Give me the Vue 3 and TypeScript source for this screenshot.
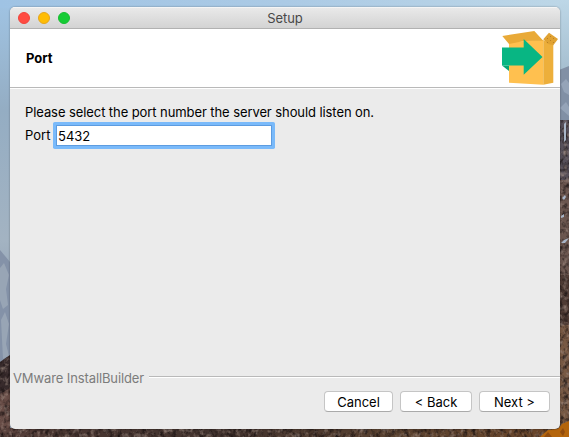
<script setup lang="ts">
import { ref } from 'vue'

const port = ref('5432')
const buttons = [
  { label: 'Cancel', kind: 'cancel' },
  { label: '< Back', kind: 'back' },
  { label: 'Next >', kind: 'next' },
]
</script>

<template>
  <div class="desktop">
    <svg class="wallpaper" viewBox="0 0 569 437" width="569" height="437" aria-hidden="true">
      <defs>
        <linearGradient id="sky" x1="0" y1="0" x2="0" y2="1">
          <stop offset="0" stop-color="#a0c4e4" />
          <stop offset="0.25" stop-color="#94adc3" />
          <stop offset="0.55" stop-color="#a3b3c2" />
          <stop offset="0.8" stop-color="#8794a8" />
        </linearGradient>
        <linearGradient id="top" x1="0" y1="0" x2="1" y2="0">
          <stop offset="0" stop-color="#9fc3e4" />
          <stop offset="0.5" stop-color="#abcae5" />
          <stop offset="1" stop-color="#bdd7e7" />
        </linearGradient>
        <linearGradient id="haze" x1="0" y1="0" x2="0" y2="1">
          <stop offset="0" stop-color="#bdd7e7" />
          <stop offset="1" stop-color="#a6bfd0" />
        </linearGradient>
        <linearGradient id="ground" x1="0" y1="0" x2="1" y2="0">
          <stop offset="0" stop-color="#5b423d" />
          <stop offset="0.1" stop-color="#493631" />
          <stop offset="0.4" stop-color="#42332e" />
          <stop offset="0.7" stop-color="#5a4230" />
          <stop offset="1" stop-color="#6b4528" />
        </linearGradient>
        <filter id="grain" x="0" y="0" width="1" height="1" color-interpolation-filters="sRGB">
          <feTurbulence type="fractalNoise" baseFrequency="0.22 0.18" numOctaves="3" seed="9" result="t" />
          <feColorMatrix in="t" values="0 0 0 0 0.1  0 0 0 0 0.07  0 0 0 0 0.07  2.2 0 0 0 -0.95" />
          <feComposite in2="SourceGraphic" operator="in" result="dark" />
          <feColorMatrix in="t" values="0 0 0 0 0.68  0 0 0 0 0.6  0 0 0 0 0.56  0 1.6 0 0 -0.8" />
          <feComposite in2="SourceGraphic" operator="in" result="light" />
          <feMerge>
            <feMergeNode in="SourceGraphic" />
            <feMergeNode in="dark" />
            <feMergeNode in="light" />
          </feMerge>
        </filter>
      </defs>
      <rect width="569" height="437" fill="url(#sky)" />
      <rect width="569" height="8" fill="url(#top)" />
      <rect x="559" width="10" height="70" fill="url(#haze)" />
      <path d="M559 70L569 66V125H559Z" fill="#8190a5" />
      <path d="M561 84l5-5 3 4v12l-5-3zM560 108l6-6 3 5v9z" fill="#95a4b8" />
      <path d="M0 250L10 262V362H0Z" fill="#8492a8" />
      <path d="M0 268l4-5 5 12-3 14 2 16-5 4-3-9zM1 320l4-8 4 12-3 20 3 12-6 3z" fill="#98a5b5" />
      <g filter="url(#grain)">
        <path d="M559 120H569V437H559Z" fill="#6b564f" />
        <path d="M559 120H569V180H559Z" fill="#57505a" />
        <path d="M559 275H569V325H559Z" fill="#4f3b34" />
        <path d="M559 325H569V425H559Z" fill="#785944" />
        <path d="M0 362L10 355V437H0Z" fill="#382b2c" />
        <path d="M0 394L10 388V437H0Z" fill="#664b45" />
        <path d="M0 428H569V437H0Z" fill="url(#ground)" />
      </g>
      <path d="M540 437L548 430L558 429L562 424L569 421V437Z" fill="#b4650c" />
      <path d="M544 437l4-5 4 5zM560 432l3-4 2 4-2 4z" fill="#914c0e" />
      <path d="M564 124l2-2v18l-2 2zM562 198l3-3 1 2-2 3zM561 216l3-2v3l-3 1zM561 243l3-3 5-2-4 5z" fill="#a8b4c6" />
    </svg>

    <main class="window">
      <header class="titlebar">
        <div class="lights">
          <span class="light close"></span>
          <span class="light minimise"></span>
          <span class="light zoom"></span>
        </div>
        <span class="title">Setup</span>
      </header>

      <section class="banner">
        <h1>Port</h1>
        <svg class="box" viewBox="0 0 58 56" width="58" height="56" aria-hidden="true">
          <path d="M7 12L41.300 10V54.700L7 52.700Z" fill="#ffc04f" />
          <path d="M0.300 6L32.300 1L41.300 10.700L22 11L7 14Z" fill="#e9aa38" />
          <path d="M41.300 10L51.300 15V52.700L41.300 54.700Z" fill="#edaf3b" />
          <path d="M41.300 9.300L47 2.700L56 9L51.300 15.300L46 14Z" fill="#e0a232" />
          <path d="M45 8h1v1h-1zM48 6h1v1h-1zM51 8h1v1h-1zM48 10h1v1h-1zM51 12h1v1h-1zM45 12h1v1h-1z" fill="#b98026" />
          <path d="M0 35.500H7V41Z" fill="#07a574" />
          <path d="M0 17.500H21.700V9L40.500 27L21.700 44.700V35.500H0Z" fill="#08b683" />
        </svg>
      </section>

      <section class="content">
        <p class="prompt">Please select the port number the server should listen on.</p>
        <div class="field">
          <label for="port">Port</label>
          <input id="port" v-model="port" type="text" />
        </div>
      </section>

      <footer class="footer">
        <div class="brand"><span>VMware InstallBuilder</span><i></i></div>
        <div class="actions">
          <button v-for="b in buttons" :key="b.kind" :class="b.kind" type="button">{{ b.label }}</button>
        </div>
      </footer>
    </main>
  </div>
</template>

<style>
body { margin: 0; overflow: hidden; }
</style>

<style scoped>
.desktop {
  position: relative;
  box-sizing: border-box;
  width: 569px;
  height: 437px;
  padding: 7px 9px 8px 10px;
  overflow: hidden;
  font: 13px/16px Inter, "Liberation Sans", sans-serif;
  color: #000;
}
.wallpaper { position: absolute; inset: 0; }
.window {
  position: relative;
  display: flex;
  flex-direction: column;
  height: 422px;
  overflow: hidden;
  border-radius: 5px;
  background: #ebebeb;
  box-shadow: 0 0 2px rgba(0, 0, 0, 0.4);
}
.titlebar {
  display: grid;
  grid-template-columns: 1fr auto 1fr;
  align-items: center;
  box-sizing: border-box;
  height: 22px;
  border-top: 1px solid #f5f5f5;
  border-bottom: 1px solid #b1b1b1;
  background: linear-gradient(#e9e9e9, #d3d3d3);
}
.lights { display: flex; gap: 8px; padding-left: 8px; }
.light { box-sizing: border-box; width: 12px; height: 12px; border-radius: 50%; }
.close { background: #ff4b42; border: 1px solid #f0443c; }
.minimise { background: #ffbd05; border: 1px solid #e5a51c; }
.zoom { background: #15cc35; border: 1px solid #16bd31; }
.title { color: #484848; letter-spacing: -0.1px; }
.banner {
  display: flex;
  justify-content: space-between;
  align-items: flex-start;
  box-sizing: border-box;
  height: 59px;
  padding: 1px 0 0 16px;
  background: #fff;
  border-bottom: 1px solid #b9b9b9;
}
h1 { margin: 20px 0 0; font-size: 13px; line-height: 16px; font-weight: 700; }
.content { flex: 1; padding: 15px 15px 0; border-top: 1px solid #fff; }
.prompt { margin: 0; white-space: nowrap; letter-spacing: -0.085px; }
.field { display: flex; align-items: flex-start; margin-top: 5px; }
label { width: 31px; padding-top: 2px; }
input {
  box-sizing: border-box;
  width: 216px;
  height: 21px;
  padding: 1px 1px 0;
  border: 1px solid #5d9ce0;
  border-radius: 0.5px;
  outline: 0;
  background: #fff;
  box-shadow: 0 0 0 3px #7abafa;
  font: inherit;
  color: inherit;
}
.footer { height: 60px; }
.brand { display: flex; align-items: flex-start; gap: 5px; padding-left: 3px; color: #7c7c7c; }
.brand span { margin-top: 1px; letter-spacing: -0.11px; }
.brand i { flex: 1; height: 1px; margin-top: 7px; background: #b9b9b9; border-bottom: 1px solid #fff; }
.actions { display: flex; justify-content: flex-end; gap: 7px; padding: 5px 10px 0 0; }
button {
  box-sizing: border-box;
  height: 21px;
  padding: 0;
  border: 1px solid #c5c5c5;
  border-bottom-color: #aaa;
  border-radius: 4px;
  background: #fff;
  font: inherit;
  color: inherit;
}
.cancel { width: 69px; }
.back { width: 72px; }
.next { width: 71px; }
</style>
